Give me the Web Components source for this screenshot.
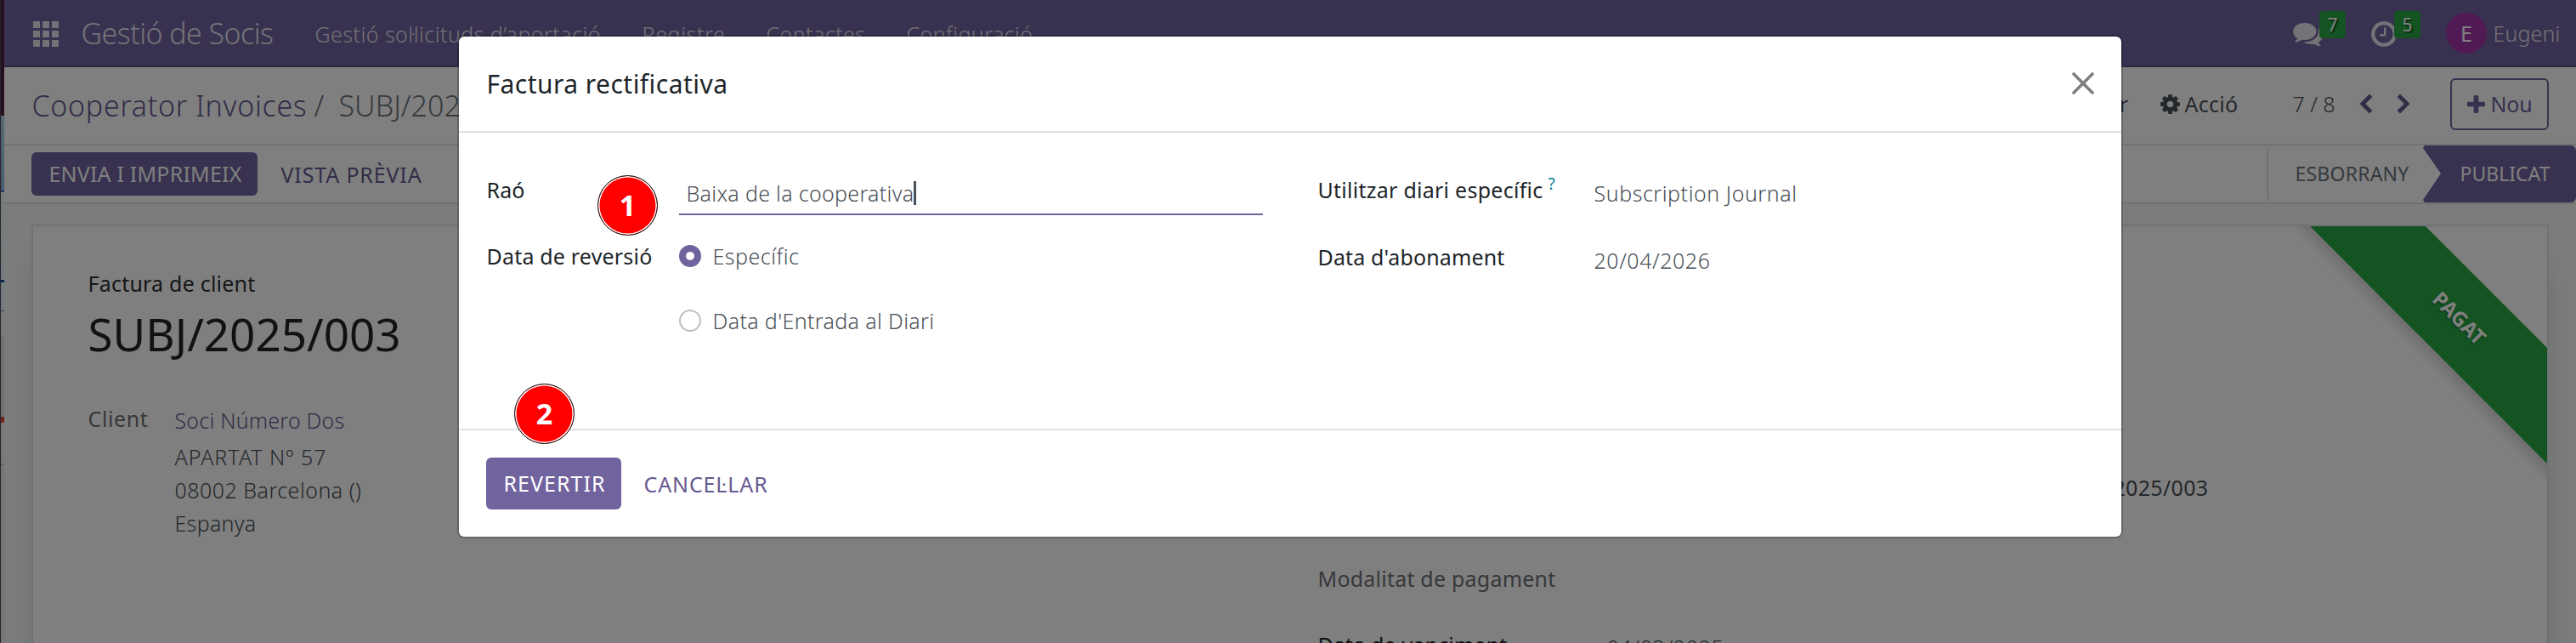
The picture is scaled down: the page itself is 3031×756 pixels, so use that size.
<!DOCTYPE html>
<html lang="ca">
<head>
<meta charset="utf-8">
<title>Gestió de Socis</title>
<style>
    html, body {
        margin: 0;
        padding: 0;
    }
    body {
        position: relative;
        width: 3031px;
        height: 756px;
        overflow: hidden;
        background: #fff;
        font-family: "Noto Sans", "Open Sans", sans-serif;
        font-size: 25px;
        line-height: 40px;
        color: #495057;
    }
</style>
</head>
<body>
<web-client></web-client>
<modal-dialog heading="Factura rectificativa">
    <reversal-form></reversal-form>
</modal-dialog>
<step-badge style="left: 703px; top: 206px">1</step-badge>
<step-badge style="left: 605px; top: 451px">2</step-badge>

<script>
    const ICONS = {
        comments: ['0 256 1792 1408', 'M1408 768q0 139-94 257t-256.5 186.5-353.5 68.5q-86 0-176-16-124 88-278 128-36 9-86 16h-3q-11 0-20.5-8t-11.5-21q-1-3-1-6.5t.5-6.5 2-6l2.5-5 3.5-5.5 4-5 4.5-5 4-4.5q5-6 23-25t26-29.5 22.5-29 25-38.5 20.5-44q-124-72-195-177t-71-224q0-139 94-257t256.5-186.5 353.5-68.5 353.5 68.5 256.5 186.5 94 257zm384 256q0 120-71 224.5t-195 176.5q10 24 20.5 44t25 38.5 22.5 29 26 29.5 23 25q1 1 4 4.5t4.5 5 4 5 3.5 5.5l2.5 5 2 6 .5 6.5-1 6.5q-3 14-13 22t-22 7q-50-7-86-16-154-40-278-128-90 16-176 16-271 0-472-132 58 4 88 4 161 0 309-45t264-129q125-92 192-212t67-254q0-77-23-152 129 71 204 178t75 230z'],
        clock: ['128 128 1536 1536', 'M1024 544v448q0 14-9 23t-23 9h-320q-14 0-23-9t-9-23v-64q0-14 9-23t23-9h224v-352q0-14 9-23t23-9h64q14 0 23 9t9 23zm416 352q0-148-73-273t-198-198-273-73-273 73-198 198-73 273 73 273 198 198 273 73 273-73 198-198 73-273zm224 0q0 209-103 385.5t-279.5 279.5-385.5 103-385.5-103-279.5-279.5-103-385.5 103-385.5 279.5-279.5 385.5-103 385.5 103 279.5 279.5 103 385.5z'],
        cog: ['128 128 1536 1536', 'M1152 896q0-106-75-181t-181-75-181 75-75 181 75 181 181 75 181-75 75-181zm512-109v222q0 12-8 23t-20 13l-185 28q-19 54-39 91 35 50 107 138 10 12 10 25t-9 23q-27 37-99 108t-94 71q-12 0-26-9l-138-108q-44 23-91 38-16 136-29 186-7 28-36 28h-222q-14 0-24.5-8.5t-11.5-21.5l-28-184q-49-16-90-37l-141 107q-10 9-25 9-14 0-25-11-126-114-165-168-7-10-7-23 0-12 8-23 15-21 51-66.5t54-70.5q-27-50-41-99l-183-27q-13-2-21-12.5t-8-23.5v-222q0-12 8-23t19-13l186-28q14-46 39-92-40-57-107-138-10-12-10-24 0-10 9-23 26-36 98.5-107.5t94.5-71.5q13 0 26 10l138 107q44-23 91-38 16-136 29-186 7-28 36-28h222q14 0 24.5 8.5t11.5 21.5l28 184q49 16 90 37l142-107q9-9 24-9 13 0 25 10 129 119 165 170 7 8 7 22 0 12-8 23-15 21-51 66.5t-54 70.5q26 50 41 98l183 28q13 2 21 12.5t8 23.5z'],
        plus: ['192 128 1408 1408', 'M1600 736v192q0 40-28 68t-68 28h-416v416q0 40-28 68t-68 28h-192q-40 0-68-28t-28-68v-416h-416q-40 0-68-28t-28-68v-192q0-40 28-68t68-28h416v-416q0-40 28-68t68-28h192q40 0 68 28t28 68v416h416q40 0 68 28t28 68z'],
        apps: ['0 0 30 30', 'M0 0h8v8H0zM11 0h8v8h-8zM22 0h8v8h-8zM0 11h8v8H0zM11 11h8v8h-8zM22 11h8v8h-8zM0 22h8v8H0zM11 22h8v8h-8zM22 22h8v8h-8z'],
        left: ['0 0 16 24', 'M12 0.6L15.4 4L7.2 12L15.4 20L12 23.4L0.5 12z'],
        right: ['0 0 16 24', 'M4 0.6L0.6 4L8.8 12L0.6 20L4 23.4L15.5 12z'],
    };

    class UiIcon extends HTMLElement {
        connectedCallback() {
            const [box, path] = ICONS[this.getAttribute('name')];
            this.attachShadow({ mode: 'open' }).innerHTML = `
                <style>
                    :host { display: block; flex: none; }
                    svg { display: block; width: 100%; height: 100%; fill: currentColor; }
                </style>
                <svg viewBox="${box}"><path d="${path}"/></svg>
            `;
        }
    }
    customElements.define('ui-icon', UiIcon);

    // One line of text, tracked so that it fills the width given in "w"
    class UiText extends HTMLElement {
        connectedCallback() {
            this.attachShadow({ mode: 'open' }).innerHTML = `
                <style>
                    :host { display: block; flex: none; white-space: nowrap; }
                    span { display: inline-block; margin-left: 1.5px; }
                </style>
                <span><slot></slot></span>
            `;
            const w = parseFloat(this.getAttribute('w'));
            if (!w) return;
            const span = this.shadowRoot.querySelector('span');
            const natural = span.getBoundingClientRect().width;
            span.style.letterSpacing = (w - 2 - natural) / this.textContent.length + 'px';
            this.style.width = w + 'px';
        }
    }
    customElements.define('ui-text', UiText);

    class AppNavbar extends HTMLElement {
        constructor() {
            super();
            this.attachShadow({ mode: 'open' }).innerHTML = `
                <style>
                    :host {
                        display: flex;
                        align-items: center;
                        box-sizing: border-box;
                        height: 79px;
                        padding: 0 18px 0 34px;
                        background: #71639e;
                        border-bottom: 2px solid #5a4f7f;
                        color: #e6e4ee;
                        font-weight: 350;
                    }
                    .apps { width: 30px; height: 30px; margin-top: 2px; }
                    .brand { font-size: 34px; margin: 1px 47px 0 25px; }
                    nav { display: flex; gap: 46px; flex: 1; margin-top: 2px; }
                    .systray { display: flex; align-items: center; }
                    .item { position: relative; }
                    .chat { width: 35px; height: 27.5px; margin: 4px 57px 0 0; }
                    .clock { width: 30px; height: 30px; margin: 2px 58px 0 0; }
                    .count {
                        position: absolute;
                        top: -10px;
                        left: 31px;
                        width: 31px;
                        height: 32px;
                        border-radius: 4px;
                        background: #28a745;
                        color: #fff;
                        font-size: 21px;
                        line-height: 32px;
                        text-align: center;
                        text-shadow: 2px 2px 1px rgba(0, 0, 0, .5);
                        font-weight: 400;
                    }
                    .clock + .count { left: 27px; }
                    .avatar {
                        width: 48px;
                        height: 48px;
                        margin: 1px 6px 0 0;
                        border-radius: 50%;
                        background: #a434a8;
                        color: #fff;
                        text-align: center;
                        line-height: 48px;
                        font-weight: 400;
                    }
                </style>
                <ui-icon class="apps" name="apps"></ui-icon>
                <ui-text class="brand" w="228">Gestió de Socis</ui-text>
                <nav>
                    <ui-text w="339">Gestió sol·licituds d’aportació</ui-text>
                    <ui-text w="100">Registre</ui-text>
                    <ui-text w="119">Contactes</ui-text>
                    <ui-text w="151">Configuració</ui-text>
                </nav>
                <div class="systray">
                    <div class="item"><ui-icon class="chat" name="comments"></ui-icon><div class="count">7</div></div>
                    <div class="item"><ui-icon class="clock" name="clock"></ui-icon><div class="count">5</div></div>
                    <div class="avatar">E</div>
                    <ui-text w="81">Eugeni</ui-text>
                </div>
            `;
        }
    }
    customElements.define('app-navbar', AppNavbar);

    class ControlPanel extends HTMLElement {
        constructor() {
            super();
            this.attachShadow({ mode: 'open' }).innerHTML = `
                <style>
                    :host {
                        display: flex;
                        align-items: center;
                        box-sizing: border-box;
                        height: 92px;
                        padding: 0 32px 4px 31px;
                        border-bottom: 2px solid #dee2e6;
                        color: #495057;
                    }
                    .crumbs { display: flex; flex: 1; font-size: 34px; font-weight: 350; color: #6c757d; padding-top: 4px; }
                    .crumbs .link { color: #66598f; margin-right: 6px; }
                    .crumbs .sep { margin-right: 12px; }
                    .action { color: #495057; font-weight: 400; }
                    .gear { width: 23px; height: 23px; margin: 0 4px 0 39px; }
                    .pager { font-weight: 350; margin: 0 28px 0 62px; }
                    .arrow { width: 16px; height: 24px; color: #66598f; }
                    .new {
                        display: flex;
                        align-items: center;
                        box-sizing: border-box;
                        width: 116px;
                        height: 61px;
                        margin-left: 47px;
                        padding-left: 18px;
                        border: 2px solid #71639e;
                        border-radius: 6px;
                        color: #71639e;
                    }
                    .new ui-icon { width: 21px; height: 21px; margin-right: 5px; }
                </style>
                <div class="crumbs">
                    <ui-text class="link" w="326">Cooperator Invoices</ui-text>
                    <ui-text class="sep" w="17">/</ui-text>
                    <ui-text w="235">SUBJ/2025/003</ui-text>
                </div>
                <ui-text class="action" w="94">Imprimir</ui-text>
                <ui-icon class="gear action" name="cog"></ui-icon>
                <ui-text class="action" w="65">Acció</ui-text>
                <ui-text class="pager" w="52">7 / 8</ui-text>
                <ui-icon class="arrow" name="left" style="margin-right:28px"></ui-icon>
                <ui-icon class="arrow" name="right"></ui-icon>
                <div class="new"><ui-icon name="plus"></ui-icon><ui-text w="51">Nou</ui-text></div>
            `;
        }
    }
    customElements.define('control-panel', ControlPanel);

    class StatusBar extends HTMLElement {
        constructor() {
            super();
            this.attachShadow({ mode: 'open' }).innerHTML = `
                <style>
                    :host {
                        display: flex;
                        align-items: center;
                        box-sizing: border-box;
                        height: 69px;
                        padding-left: 32px;
                        border-bottom: 2px solid #dee2e6;
                    }
                    .primary {
                        box-sizing: border-box;
                        width: 266px;
                        height: 51px;
                        padding-left: 19px;
                        border-radius: 6px;
                        background: #71639e;
                        color: #fff;
                        line-height: 51px;
                    }
                    .link { flex: 1; padding-left: 26px; color: #66598f; }
                    .steps { display: flex; height: 67px; font-size: 23px; line-height: 66px; }
                    .draft {
                        box-sizing: border-box;
                        width: 184px;
                        padding-left: 30px;
                        border-left: 2px solid #dee2e6;
                        border-radius: 8px 0 0 8px;
                        color: #6c757d;
                    }
                    .posted {
                        box-sizing: border-box;
                        width: 180px;
                        padding-left: 42px;
                        background: #71639e;
                        border-radius: 0 6px 6px 0;
                        color: #fff;
                        clip-path: polygon(0 3px, 2px 0, 100% 0, 100% 100%, 2px 100%, 0 64px, 21px 33px);
                    }
                </style>
                <div class="primary"><ui-text w="229">ENVIA I IMPRIMEIX</ui-text></div>
                <div class="link"><ui-text w="168">VISTA PRÈVIA</ui-text></div>
                <div class="steps">
                    <div class="draft"><ui-text w="136">ESBORRANY</ui-text></div>
                    <div class="posted"><ui-text w="108">PUBLICAT</ui-text></div>
                </div>
            `;
        }
    }
    customElements.define('status-bar', StatusBar);

    class FormSheet extends HTMLElement {
        constructor() {
            super();
            this.attachShadow({ mode: 'open' }).innerHTML = `
                <style>
                    :host {
                        display: block;
                        padding: 24px 32px 0;
                        background: #f8f9fa;
                        overflow: hidden;
                    }
                    .sheet {
                        position: relative;
                        box-sizing: border-box;
                        height: 620px;
                        padding: 47px 0 0 63px;
                        background: #fff;
                        border: 2px solid #dee2e6;
                        box-shadow: 0 30px 40px -14px rgba(20, 50, 40, .25);
                        line-height: 39px;
                    }
                    .kind { color: #2b2f33; line-height: 40px; }
                    .name { color: #212529; font-size: 53px; line-height: 80px; margin-bottom: 40px; }
                    .cols { display: grid; grid-template-columns: 102px 1345px 340px auto; }
                    .label { color: #6d7074; }
                    .value { font-weight: 350; padding-top: 2px; color: #495057; }
                    .value .partner { color: #66598f; margin-bottom: 4px; }
                    .mode { padding-top: 188px; }
                    .due { padding-top: 39px; color: #212529; }
                    .data { padding-top: 81px; color: #495057; font-weight: 350; }
                    .data .ref { margin-left: 530px; font-weight: 400; }
                    .data .date { padding-top: 149px; }
                    .ribbon {
                        position: absolute;
                        top: 0;
                        right: 0;
                        width: 300px;
                        height: 300px;
                        overflow: hidden;
                    }
                    .ribbon span {
                        position: absolute;
                        left: -31px;
                        top: 57px;
                        box-sizing: border-box;
                        width: 450px;
                        height: 96px;
                        padding-left: 8px;
                        transform: rotate(45deg);
                        background: #28a745;
                        box-shadow: 0 8px 14px rgba(0, 0, 0, .15);
                        color: #fff;
                        font-weight: 700;
                        font-size: 24px;
                        line-height: 96px;
                        text-align: center;
                        text-shadow: 0 2px 2px rgba(0, 0, 0, .3);
                    }
                </style>
                <div class="sheet">
                    <ui-text class="kind" w="199">Factura de client</ui-text>
                    <ui-text class="name" w="370">SUBJ/2025/003</ui-text>
                    <div class="cols">
                        <ui-text class="label" w="73">Client</ui-text>
                        <div class="value">
                            <ui-text class="partner" w="202">Soci Número Dos</ui-text>
                            <ui-text w="181">APARTAT Nº 57</ui-text>
                            <ui-text w="222">08002 Barcelona ()</ui-text>
                            <ui-text w="98">Espanya</ui-text>
                        </div>
                        <div>
                            <ui-text class="label mode" w="282">Modalitat de pagament</ui-text>
                            <ui-text class="due" w="225">Data de venciment</ui-text>
                        </div>
                        <div class="data">
                            <ui-text class="ref" w="180">SUBJ/2025/003</ui-text>
                            <ui-text class="date" w="140">04/03/2025</ui-text>
                        </div>
                    </div>
                    <div class="ribbon"><span>PAGAT</span></div>
                </div>
            `;
        }
    }
    customElements.define('form-sheet', FormSheet);

    // Sliver of the neighbouring window, left of the client
    class WindowEdge extends HTMLElement {
        constructor() {
            super();
            this.attachShadow({ mode: 'open' }).innerHTML = `
                <style>
                    :host {
                        display: block;
                        width: 5px;
                        box-sizing: border-box;
                        border-left: 1px solid #4c4658;
                        background: linear-gradient(
                            #501e38 0 136px, #bcdcf8 136px 137px, #bfe0fa 137px 138px,
                            #a8cce8 138px 150px, #8fb9dc 224px, #3f76c8 224px 226px,
                            #f0fafa 226px, #e8f4f6 329px, #0a48a0 329px 332px,
                            #e6f4f8 332px 365px, #5790d8 365px 366px,
                            #faf4fa 366px 396px, #e2dfe0 396px 490px,
                            #e84440 490px 497px, #f2efef 497px 545px,
                            #c8c4c4 545px 547px, #ece9e9 547px);
                    }
                </style>
            `;
        }
    }
    customElements.define('window-edge', WindowEdge);

    class WebClient extends HTMLElement {
        constructor() {
            super();
            this.attachShadow({ mode: 'open' }).innerHTML = `
                <style>
                    :host { display: flex; height: 756px; overflow: hidden; }
                    main { flex: 1; display: flex; flex-direction: column; }
                    form-sheet { flex: 1; }
                    .backdrop { position: absolute; inset: 0; background: rgba(0, 0, 0, .5); }
                </style>
                <window-edge></window-edge>
                <main>
                    <app-navbar></app-navbar>
                    <control-panel></control-panel>
                    <status-bar></status-bar>
                    <form-sheet></form-sheet>
                </main>
                <div class="backdrop"></div>
            `;
        }
    }
    customElements.define('web-client', WebClient);

    class RadioOption extends HTMLElement {
        constructor() {
            super();
            this.attachShadow({ mode: 'open' }).innerHTML = `
                <style>
                    :host { display: flex; align-items: center; gap: 12px; height: 40px; }
                    i {
                        box-sizing: border-box;
                        width: 26px;
                        height: 26px;
                        border: 2px solid #bfbfbf;
                        border-radius: 50%;
                        background: #fff;
                    }
                    :host([checked]) i { border: 8px solid #71639e; }
                </style>
                <i></i><slot></slot>
            `;
        }
    }
    customElements.define('radio-option', RadioOption);

    class ReversalForm extends HTMLElement {
        constructor() {
            super();
            this.attachShadow({ mode: 'open' }).innerHTML = `
                <style>
                    :host {
                        display: grid;
                        grid-template-columns: 228px 687px 63px 325px auto;
                        grid-template-rows: 78px auto;
                        padding: 47px 31px 0;
                        color: #495057;
                        font-weight: 350;
                    }
                    .label { color: #212529; font-weight: 400; display: flex; }
                    .input {
                        display: flex;
                        box-sizing: border-box;
                        height: 46px;
                        margin-top: 4px;
                        padding-left: 7px;
                        border-bottom: 2px solid #71639e;
                    }
                    .caret { width: 3px; height: 28px; margin: 6px 0 0 -1px; background: #495057; }
                    .help { color: #017e9b; font-size: 19px; line-height: 24px; margin: 1px 0 0 4px; }
                    .val { margin-top: 4px; }
                    .second { padding-top: 1px; }
                    radio-option + radio-option { margin-top: 36px; }
                </style>
                <div class="label"><ui-text w="47">Raó</ui-text></div>
                <div class="input"><ui-text w="270">Baixa de la cooperativa</ui-text><div class="caret"></div></div>
                <div></div>
                <div class="label"><ui-text w="267">Utilitzar diari específic</ui-text><ui-text class="help">?</ui-text></div>
                <ui-text class="val" w="241">Subscription Journal</ui-text>

                <div class="label"><ui-text w="197">Data de reversió</ui-text></div>
                <div>
                    <radio-option checked><ui-text w="104">Específic</ui-text></radio-option>
                    <radio-option><ui-text w="263">Data d'Entrada al Diari</ui-text></radio-option>
                </div>
                <div></div>
                <div class="label second"><ui-text w="222">Data d'abonament</ui-text></div>
                <ui-text class="val second" w="139">20/04/2026</ui-text>
            `;
        }
    }
    customElements.define('reversal-form', ReversalForm);

    class ModalDialog extends HTMLElement {
        constructor() {
            super();
            this.attachShadow({ mode: 'open' });
        }
        connectedCallback() {
            this.shadowRoot.innerHTML = `
                <style>
                    :host {
                        position: absolute;
                        left: 538px;
                        top: 41px;
                        box-sizing: border-box;
                        width: 1960px;
                        height: 592px;
                        display: flex;
                        flex-direction: column;
                        background: #fff;
                        background-clip: padding-box;
                        border: 2px solid rgba(0, 0, 0, .2);
                        border-radius: 8px;
                    }
                    header {
                        display: flex;
                        align-items: center;
                        justify-content: space-between;
                        height: 111px;
                        padding: 0 32px 0 31px;
                        border-bottom: 2px solid #dee2e6;
                    }
                    h4 { margin: 0; font-size: 30px; font-weight: 400; color: #212529; }
                    header svg { width: 26px; height: 26px; margin-top: -1px; stroke: #7f7f7f; stroke-width: 3.6; stroke-linecap: round; }
                    section { flex: 1; }
                    footer {
                        display: flex;
                        align-items: center;
                        height: 125px;
                        padding-left: 32px;
                        border-top: 2px solid #dee2e6;
                    }
                    .primary {
                        box-sizing: border-box;
                        width: 159px;
                        height: 61px;
                        padding-left: 19px;
                        border-radius: 6px;
                        background: #71639e;
                        color: #fff;
                        line-height: 61px;
                    }
                    .link { margin-left: 25px; color: #66598f; }
                </style>
                <header>
                    <h4><ui-text w="286">${this.getAttribute('heading')}</ui-text></h4>
                    <svg viewBox="0 0 26 26"><path d="M2 2L24 24M24 2L2 24"/></svg>
                </header>
                <section><slot></slot></section>
                <footer>
                    <div class="primary"><ui-text w="122">REVERTIR</ui-text></div>
                    <ui-text class="link" w="149">CANCEL·LAR</ui-text>
                </footer>
            `;
        }
    }
    customElements.define('modal-dialog', ModalDialog);

    class StepBadge extends HTMLElement {
        constructor() {
            super();
            this.attachShadow({ mode: 'open' }).innerHTML = `
                <style>
                    :host {
                        position: absolute;
                        box-sizing: border-box;
                        width: 71px;
                        height: 71px;
                        border: 1.5px solid #111;
                        border-radius: 50%;
                        background: #f00;
                        box-shadow: inset 0 0 0 1.5px #fff;
                        color: #fff;
                        font: 700 34px/68px "Open Sans", sans-serif;
                        text-align: center;
                    }
                </style>
                <slot></slot>
            `;
        }
    }
    customElements.define('step-badge', StepBadge);
</script>
</body>
</html>
